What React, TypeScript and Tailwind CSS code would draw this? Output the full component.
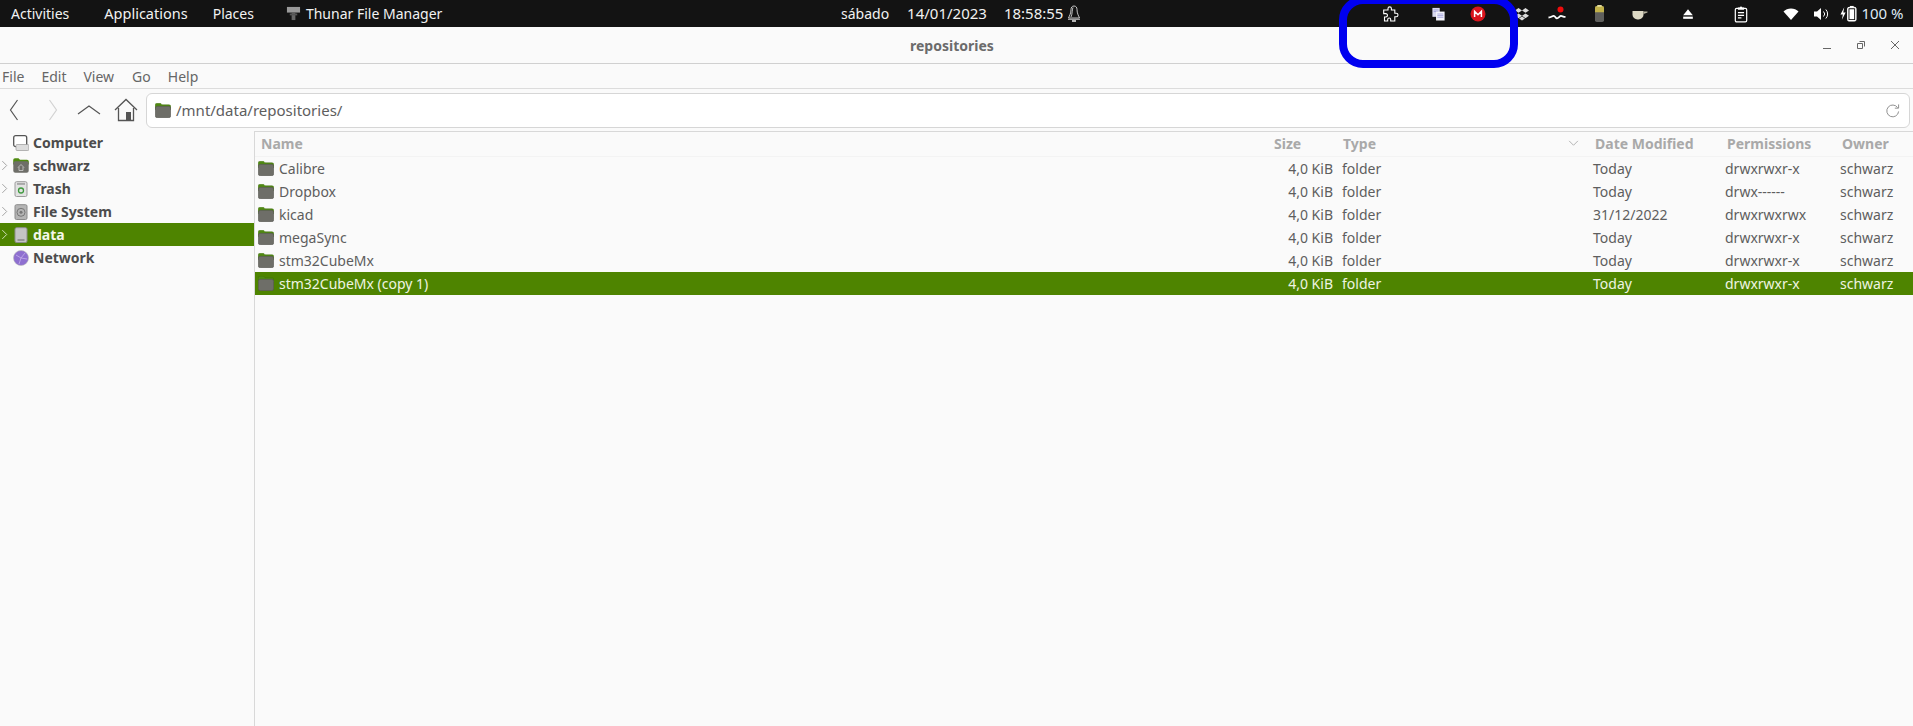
import React from "react";

const rows = [
  { name: "Calibre", date: "Today", perm: "drwxrwxr-x" },
  { name: "Dropbox", date: "Today", perm: "drwx------" },
  { name: "kicad", date: "31/12/2022", perm: "drwxrwxrwx" },
  { name: "megaSync", date: "Today", perm: "drwxrwxr-x" },
  { name: "stm32CubeMx", date: "Today", perm: "drwxrwxr-x" },
  { name: "stm32CubeMx (copy 1)", date: "Today", perm: "drwxrwxr-x", selected: true },
];

function Folder({ className = "" }: { className?: string }) {
  return (
    <svg viewBox="0 0 16 15" className={`w-4 h-[15px] shrink-0 ${className}`}>
      <path d="M0.200 2a1.800 1.800 0 0 1 1.800-1.800h3.500l1.500 1.500h7a1.800 1.800 0 0 1 1.800 1.800v3H0.200z" fill="#4f8a10" stroke="#3c6a0a" strokeWidth="0.400" />
      <rect x="0.300" y="3.300" width="15.400" height="11.400" rx="2" fill="#6e6e68" stroke="#55554f" strokeWidth="0.600" />
    </svg>
  );
}

function Chevron({ color = "#9a9a9a" }: { color?: string }) {
  return (
    <svg viewBox="0 0 8 12" className="w-[7px] h-[11px] shrink-0">
      <path d="M1.500 1l5 5-5 5" fill="none" stroke={color} strokeWidth="1" />
    </svg>
  );
}

function Puzzle() {
  return (
    <svg viewBox="0 0 16 16" className="w-4 h-4 shrink-0">
      <path d="M0.700 4h4.300V2.600a1.700 1.700 0 0 1 3.400 0V4h3.400v3.200h1.400a1.800 1.800 0 0 1 0 3.600h-1.400v4.200H7.700v-1.500a1.500 1.500 0 0 0-3 0V15H1.500v-4h1.300a1.700 1.700 0 0 0 0-3.400H0.700z" fill="none" stroke="#fff" strokeWidth="1.100" />
    </svg>
  );
}

function Docs() {
  return (
    <svg viewBox="0 0 16 16" className="w-[13px] h-[14px] shrink-0">
      <rect x="0.500" y="0.500" width="9" height="11" fill="#d8d8ee" />
      <path d="M2 3h6M2 5h6" stroke="#8888cc" strokeWidth="0.800" />
      <rect x="5" y="5" width="10.500" height="11" fill="#f4f4fb" />
      <path d="M6.500 8h7.500M6.500 10h7.500M6.500 12h7.500" stroke="#8f8fd6" strokeWidth="0.900" />
    </svg>
  );
}

function Mega() {
  return (
    <svg viewBox="0 0 16 16" className="w-4 h-4 shrink-0">
      <circle cx="8" cy="8" r="7.500" fill="#d9141c" />
      <path d="M4.600 11V5.400l3.400 3.400 3.400-3.400V11" fill="none" stroke="#fff" strokeWidth="1.500" />
    </svg>
  );
}

function DropboxIcon() {
  return (
    <svg viewBox="0 0 16 16" className="w-4 h-4 shrink-0">
      <path d="M4.500 2L8 4.400 4.500 6.800 1 4.400zM11.500 2L15 4.400l-3.500 2.400L8 4.400zM4.500 7.400L8 9.800l-3.500 2.400L1 9.800zM11.500 7.400L15 9.800l-3.500 2.400L8 9.800zM8 10.600l3 2-3 2-3-2z" fill="#dcdcdc" />
    </svg>
  );
}

function Wave() {
  return (
    <svg viewBox="0 0 18 16" className="w-[18px] h-4 shrink-0">
      <path d="M0.500 11.500c3 0 3.500-1.600 5.200-1.600s1.800 2.400 3.300 2.400 2.600-2.400 4-2.400 2 1 4.500 1" fill="none" stroke="#fff" strokeWidth="1.800" />
      <circle cx="12.500" cy="3.500" r="3" fill="#ee0c0c" />
    </svg>
  );
}

function Cell() {
  return (
    <svg viewBox="0 0 12 20" className="w-[11px] h-[18px] shrink-0">
      <rect x="1" y="1" width="10" height="18" rx="2" fill="#5f5f5d" />
      <path d="M1 3a2 2 0 0 1 2-2h6a2 2 0 0 1 2 2v5H1z" fill="#c2b24a" />
      <rect x="3.500" y="0" width="5" height="2" fill="#e4dca0" />
    </svg>
  );
}

function Cup() {
  return (
    <svg viewBox="0 0 16 14" className="w-4 h-[14px] shrink-0">
      <path d="M0.500 4h11v3.500a5 5 0 0 1-5 5h-1a5 5 0 0 1-5-5z" fill="#dcd8c4" />
      <path d="M11.500 4.500H15.500v1l-4 1.500z" fill="#b8b4a0" />
    </svg>
  );
}

function Eject() {
  return (
    <svg viewBox="0 0 16 16" className="w-[14px] h-[14px] shrink-0">
      <path d="M8 2.500l5.500 7h-11z" fill="#fff" />
      <rect x="2.500" y="11" width="11" height="2.500" fill="#fff" />
    </svg>
  );
}

function Clipboard() {
  return (
    <svg viewBox="0 0 16 20" className="w-[14px] h-[18px] shrink-0">
      <rect x="1.500" y="3.500" width="13" height="15.500" rx="1.500" fill="none" stroke="#fff" strokeWidth="1.400" />
      <path d="M4.500 5V2.500h2a1.600 1.600 0 0 1 3 0h2V5z" fill="#fff" />
      <path d="M4.500 8.500h7M4.500 11.500h7M4.500 14.500h4" stroke="#fff" strokeWidth="1.300" />
    </svg>
  );
}

function Wifi() {
  return (
    <svg viewBox="0 0 16 14" className="w-4 h-[14px] shrink-0">
      <path d="M8 13L0.500 4.500C2.500 2.500 5 1.500 8 1.500s5.500 1 7.500 3z" fill="#fff" />
    </svg>
  );
}

function Volume() {
  return (
    <svg viewBox="0 0 16 16" className="w-4 h-4 shrink-0">
      <path d="M1 5.500h3L8 2v12l-4-3.500H1z" fill="#fff" />
      <path d="M10.500 5.500a3.500 3.500 0 0 1 0 5M12.800 3.500a6.500 6.500 0 0 1 0 9" fill="none" stroke="#fff" strokeWidth="1" />
    </svg>
  );
}

function Battery() {
  return (
    <svg viewBox="0 0 18 18" className="w-[17px] h-[17px] shrink-0">
      <path d="M4.500 2.500L0.500 10h2.500l-1 5.500L6 8H3.500z" fill="#fff" />
      <rect x="8" y="2.500" width="9" height="14.500" rx="1.500" fill="#fff" stroke="#fff" />
      <rect x="9" y="3.500" width="7" height="12.500" rx="0.500" fill="#131313" />
      <rect x="10" y="4.500" width="5" height="10.500" fill="#fff" />
      <rect x="10.500" y="1" width="4" height="1.500" fill="#fff" />
    </svg>
  );
}

function Bell() {
  return (
    <svg viewBox="0 0 14 18" className="w-[14px] h-[18px] shrink-0">
      <path d="M7 1c-2 0-3 1.500-3 3.500 0 4-1.500 6-2.500 8.500h11c-1-2.500-2.500-4.500-2.500-8.500C10 2.500 9 1 7 1zM6 2.500C5 4 5.500 9 4 12" fill="none" stroke="#eee" strokeWidth="0.800" />
      <path d="M1 14.300h12" stroke="#eee" strokeWidth="0.800" />
      <path d="M5 16h4" stroke="#eee" strokeWidth="1.500" />
    </svg>
  );
}

function TopBar() {
  return (
    <div className="h-[27px] bg-[#131313] text-[#f1f1f1] text-[14px] flex items-center shrink-0">
      <div className="w-[841px] flex items-center shrink-0">
        <span className="ml-[11px]">Activities</span>
        <span className="ml-[35px] text-[14.5px]">Applications</span>
        <span className="ml-[25px]">Places</span>
        <svg viewBox="0 0 16 16" className="w-[15px] h-[15px] ml-[32px] shrink-0">
          <rect x="1" y="1" width="14" height="6" fill="#9a9a9a" />
          <rect x="6" y="7" width="4" height="8" fill="#666" />
          <rect x="4" y="8" width="8" height="2" fill="#555" />
        </svg>
        <span className="ml-[5px]">Thunar File Manager</span>
      </div>
      <span>sábado</span>
      <span className="ml-[18px] text-[15px]">14/01/2023</span>
      <span className="ml-[17px] text-[15px]">18:58:55</span>
      <span className="ml-[4px]"><Bell /></span>
      <div className="ml-[302px] flex items-center">
        <Puzzle />
        <span className="ml-[33px]"><Docs /></span>
        <span className="ml-[25px]"><Mega /></span>
        <span className="ml-[28px]"><DropboxIcon /></span>
        <span className="ml-[18px]"><Wave /></span>
        <span className="ml-[28px]"><Cell /></span>
        <span className="ml-[27px]"><Cup /></span>
        <span className="ml-[33px]"><Eject /></span>
        <span className="ml-[39px]"><Clipboard /></span>
        <span className="ml-[35px]"><Wifi /></span>
        <span className="ml-[14px]"><Volume /></span>
        <span className="ml-[11px]"><Battery /></span>
        <span className="ml-[4px] text-[15px] text-[#dfe9f5]">100 %</span>
      </div>
    </div>
  );
}

function TitleBar() {
  return (
    <div className="h-[37px] border-b border-[#d0d0d0] flex items-center shrink-0 pl-[910px]">
      <span className="font-bold text-[14px] text-[#6b6b6b]">repositories</span>
      <div className="ml-auto flex items-center pr-[13px] gap-[24px]">
        <svg viewBox="0 0 10 10" className="w-[10px] h-[10px]"><path d="M1 8.500h8" stroke="#666" strokeWidth="1" /></svg>
        <svg viewBox="0 0 10 10" className="w-[10px] h-[10px]"><path d="M3.500 1.500h5v5M1.500 3.500h5v5h-5z" fill="none" stroke="#666" strokeWidth="1" /></svg>
        <svg viewBox="0 0 10 10" className="w-[10px] h-[10px]"><path d="M1 1l8 8M9 1l-8 8" stroke="#666" strokeWidth="1" /></svg>
      </div>
    </div>
  );
}

function MenuBar() {
  return (
    <div className="h-[25px] border-b border-[#dcdcdc] flex items-center text-[14px] text-[#666] shrink-0">
      <span className="ml-[2px]">File</span>
      <span className="ml-[17px]">Edit</span>
      <span className="ml-[17px]">View</span>
      <span className="ml-[18px]">Go</span>
      <span className="ml-[17px]">Help</span>
    </div>
  );
}

function Toolbar() {
  return (
    <div className="h-[42px] flex items-center shrink-0">
      <svg viewBox="0 0 10 22" className="w-[10px] h-[22px] ml-[9px] shrink-0"><path d="M8.500 1L1.500 11l7 10" fill="none" stroke="#555" strokeWidth="1.200" /></svg>
      <svg viewBox="0 0 10 22" className="w-[10px] h-[22px] ml-[29px] shrink-0"><path d="M1.500 1l7 10-7 10" fill="none" stroke="#d2d2d2" strokeWidth="1.200" /></svg>
      <svg viewBox="0 0 24 12" className="w-[24px] h-[12px] ml-[19px] shrink-0"><path d="M1 10L12 2l11 8" fill="none" stroke="#555" strokeWidth="1.200" /></svg>
      <svg viewBox="0 0 24 24" className="w-[24px] h-[24px] ml-[13px] shrink-0">
        <path d="M1 12L12 1.500 23 12M4.500 10v12.500h15V10" fill="none" stroke="#555" strokeWidth="1.300" />
        <rect x="12" y="14" width="5" height="8.500" fill="#555" />
      </svg>
      <div className="ml-[8px] flex-1 mr-[3px] h-[35px] border border-[#d6d6d6] rounded-[6px] bg-white flex items-center pl-[8px] pr-[9px]">
        <Folder />
        <span className="ml-[5px] text-[15px] text-[#5e5e5e]">/mnt/data/repositories/</span>
        <svg viewBox="0 0 16 16" className="w-[15px] h-[15px] ml-auto"><path d="M13.500 5A6.300 6.300 0 1 0 14.500 9M14.500 1.500v4h-4" fill="none" stroke="#8a8a8a" strokeWidth="1" /></svg>
      </div>
    </div>
  );
}

function SideIcon({ kind }: { kind: string }) {
  if (kind === "computer") {
    return (
      <svg viewBox="0 0 16 16" className="w-4 h-4 shrink-0">
        <rect x="0.700" y="0.700" width="13" height="11" rx="2" fill="#fff" stroke="#555" strokeWidth="1.300" />
        <rect x="3" y="9.500" width="12.800" height="6" rx="1" fill="#ddd" stroke="#999" strokeWidth="0.700" />
      </svg>
    );
  }
  if (kind === "home") {
    return (
      <svg viewBox="0 0 16 15" className="w-4 h-[15px] shrink-0">
        <path d="M0.200 2a1.800 1.800 0 0 1 1.800-1.800h3.500l1.500 1.500h7a1.800 1.800 0 0 1 1.800 1.800v3H0.200z" fill="#4f8a10" />
        <rect x="0.300" y="3.300" width="15.400" height="11.400" rx="2" fill="#6e6e68" />
        <path d="M5 9.500l3-3 3 3M6 9v3.500h4V9" fill="none" stroke="#ddd" strokeWidth="0.700" />
      </svg>
    );
  }
  if (kind === "trash") {
    return (
      <svg viewBox="0 0 16 16" className="w-4 h-4 shrink-0">
        <rect x="2" y="0.700" width="12" height="14.800" rx="1.500" fill="#e2e2e2" stroke="#9c9c9c" />
        <rect x="4" y="2.200" width="8" height="1.500" fill="#999" />
        <circle cx="8" cy="9.500" r="2.500" fill="none" stroke="#3f9a3f" strokeWidth="1.300" />
      </svg>
    );
  }
  if (kind === "disk") {
    return (
      <svg viewBox="0 0 16 16" className="w-4 h-4 shrink-0">
        <rect x="2" y="0.700" width="12" height="14.800" rx="1.500" fill="#b5b5b5" stroke="#8c8c8c" />
        <circle cx="8" cy="8.300" r="4" fill="none" stroke="#777" />
        <circle cx="8" cy="8.300" r="1.500" fill="#777" />
      </svg>
    );
  }
  if (kind === "drive") {
    return (
      <svg viewBox="0 0 16 16" className="w-4 h-4 shrink-0">
        <rect x="2" y="0.700" width="12" height="14.800" rx="1.500" fill="#c4c4c4" stroke="#8e8e8e" />
        <path d="M4.500 13h7" stroke="#666" />
      </svg>
    );
  }
  return (
    <svg viewBox="0 0 16 16" className="w-4 h-4 shrink-0">
      <circle cx="8" cy="8" r="7.500" fill="#8e6fd0" stroke="#bbb" strokeWidth="0.600" />
      <path d="M3 5l5 3 4-5M8 8l-2 6M8 8l6 1" fill="none" stroke="#cbb9ee" strokeWidth="0.700" />
    </svg>
  );
}

function Sidebar() {
  const items = [
    { label: "Computer", kind: "computer", arrow: false },
    { label: "schwarz", kind: "home", arrow: true },
    { label: "Trash", kind: "trash", arrow: true },
    { label: "File System", kind: "disk", arrow: true },
    { label: "data", kind: "drive", arrow: true, active: true },
    { label: "Network", kind: "network", arrow: false },
  ];
  return (
    <div className="w-[254px] shrink-0 border-r border-[#d8d8d8] box-content">
      {items.map((item) => (
        <div
          key={item.label}
          className={`h-[23px] flex items-center pl-[1px] font-bold text-[14px] ${item.active ? "bg-[#4e8400] text-[#f4f8ec]" : "text-[#4c4c4c]"}`}
        >
          <span className="w-[7px] flex">{item.arrow && <Chevron color={item.active ? "#dfe8cf" : "#9a9a9a"} />}</span>
          <span className="ml-[5px]"><SideIcon kind={item.kind} /></span>
          <span className="ml-[4px]">{item.label}</span>
        </div>
      ))}
    </div>
  );
}

function FileList() {
  return (
    <div className="flex-1 border-t border-[#d8d8d8] text-[14px] text-[#5e5e5e]">
      <div className="h-[25px] pb-[2px] flex items-center font-bold text-[#a9a9a9] border-b border-[#f3f3f3]">
        <span className="w-[1019px] pl-[6px]">Name</span>
        <span className="w-[69px]">Size</span>
        <span className="w-[225px]">Type</span>
        <span className="w-[27px]">
          <svg viewBox="0 0 12 8" className="w-[11px] h-[7px]"><path d="M1 1l5 5 5-5" fill="none" stroke="#a9a9a9" strokeWidth="1" /></svg>
        </span>
        <span className="w-[132px]">Date Modified</span>
        <span className="w-[115px]">Permissions</span>
        <span>Owner</span>
      </div>
      {rows.map((r) => (
        <div key={r.name} className={`h-[23px] flex items-center ${r.selected ? "bg-[#4e8400] text-[#eef4e2]" : ""}`}>
          <div className="w-[1020px] flex items-center pl-[3px]">
            <Folder />
            <span className="ml-[5px]">{r.name}</span>
          </div>
          <span className="w-[58px] text-right">4,0 KiB</span>
          <span className="ml-[9px] w-[251px]">folder</span>
          <span className="w-[132px]">{r.date}</span>
          <span className="w-[115px]">{r.perm}</span>
          <span>schwarz</span>
        </div>
      ))}
    </div>
  );
}

export default function App() {
  return (
    <div className="relative w-[1913px] h-[726px] overflow-hidden bg-[#fafafa] flex flex-col font-['Noto_Sans',sans-serif]">
      <TopBar />
      <TitleBar />
      <MenuBar />
      <Toolbar />
      <div className="flex flex-1 min-h-0">
        <Sidebar />
        <FileList />
      </div>
      {/* annotation drawn over the screenshot */}
      <div className="absolute left-[1339px] top-[-4px] w-[179px] h-[72px] border-[8px] border-[#0000f0] rounded-[24px]" />
    </div>
  );
}
